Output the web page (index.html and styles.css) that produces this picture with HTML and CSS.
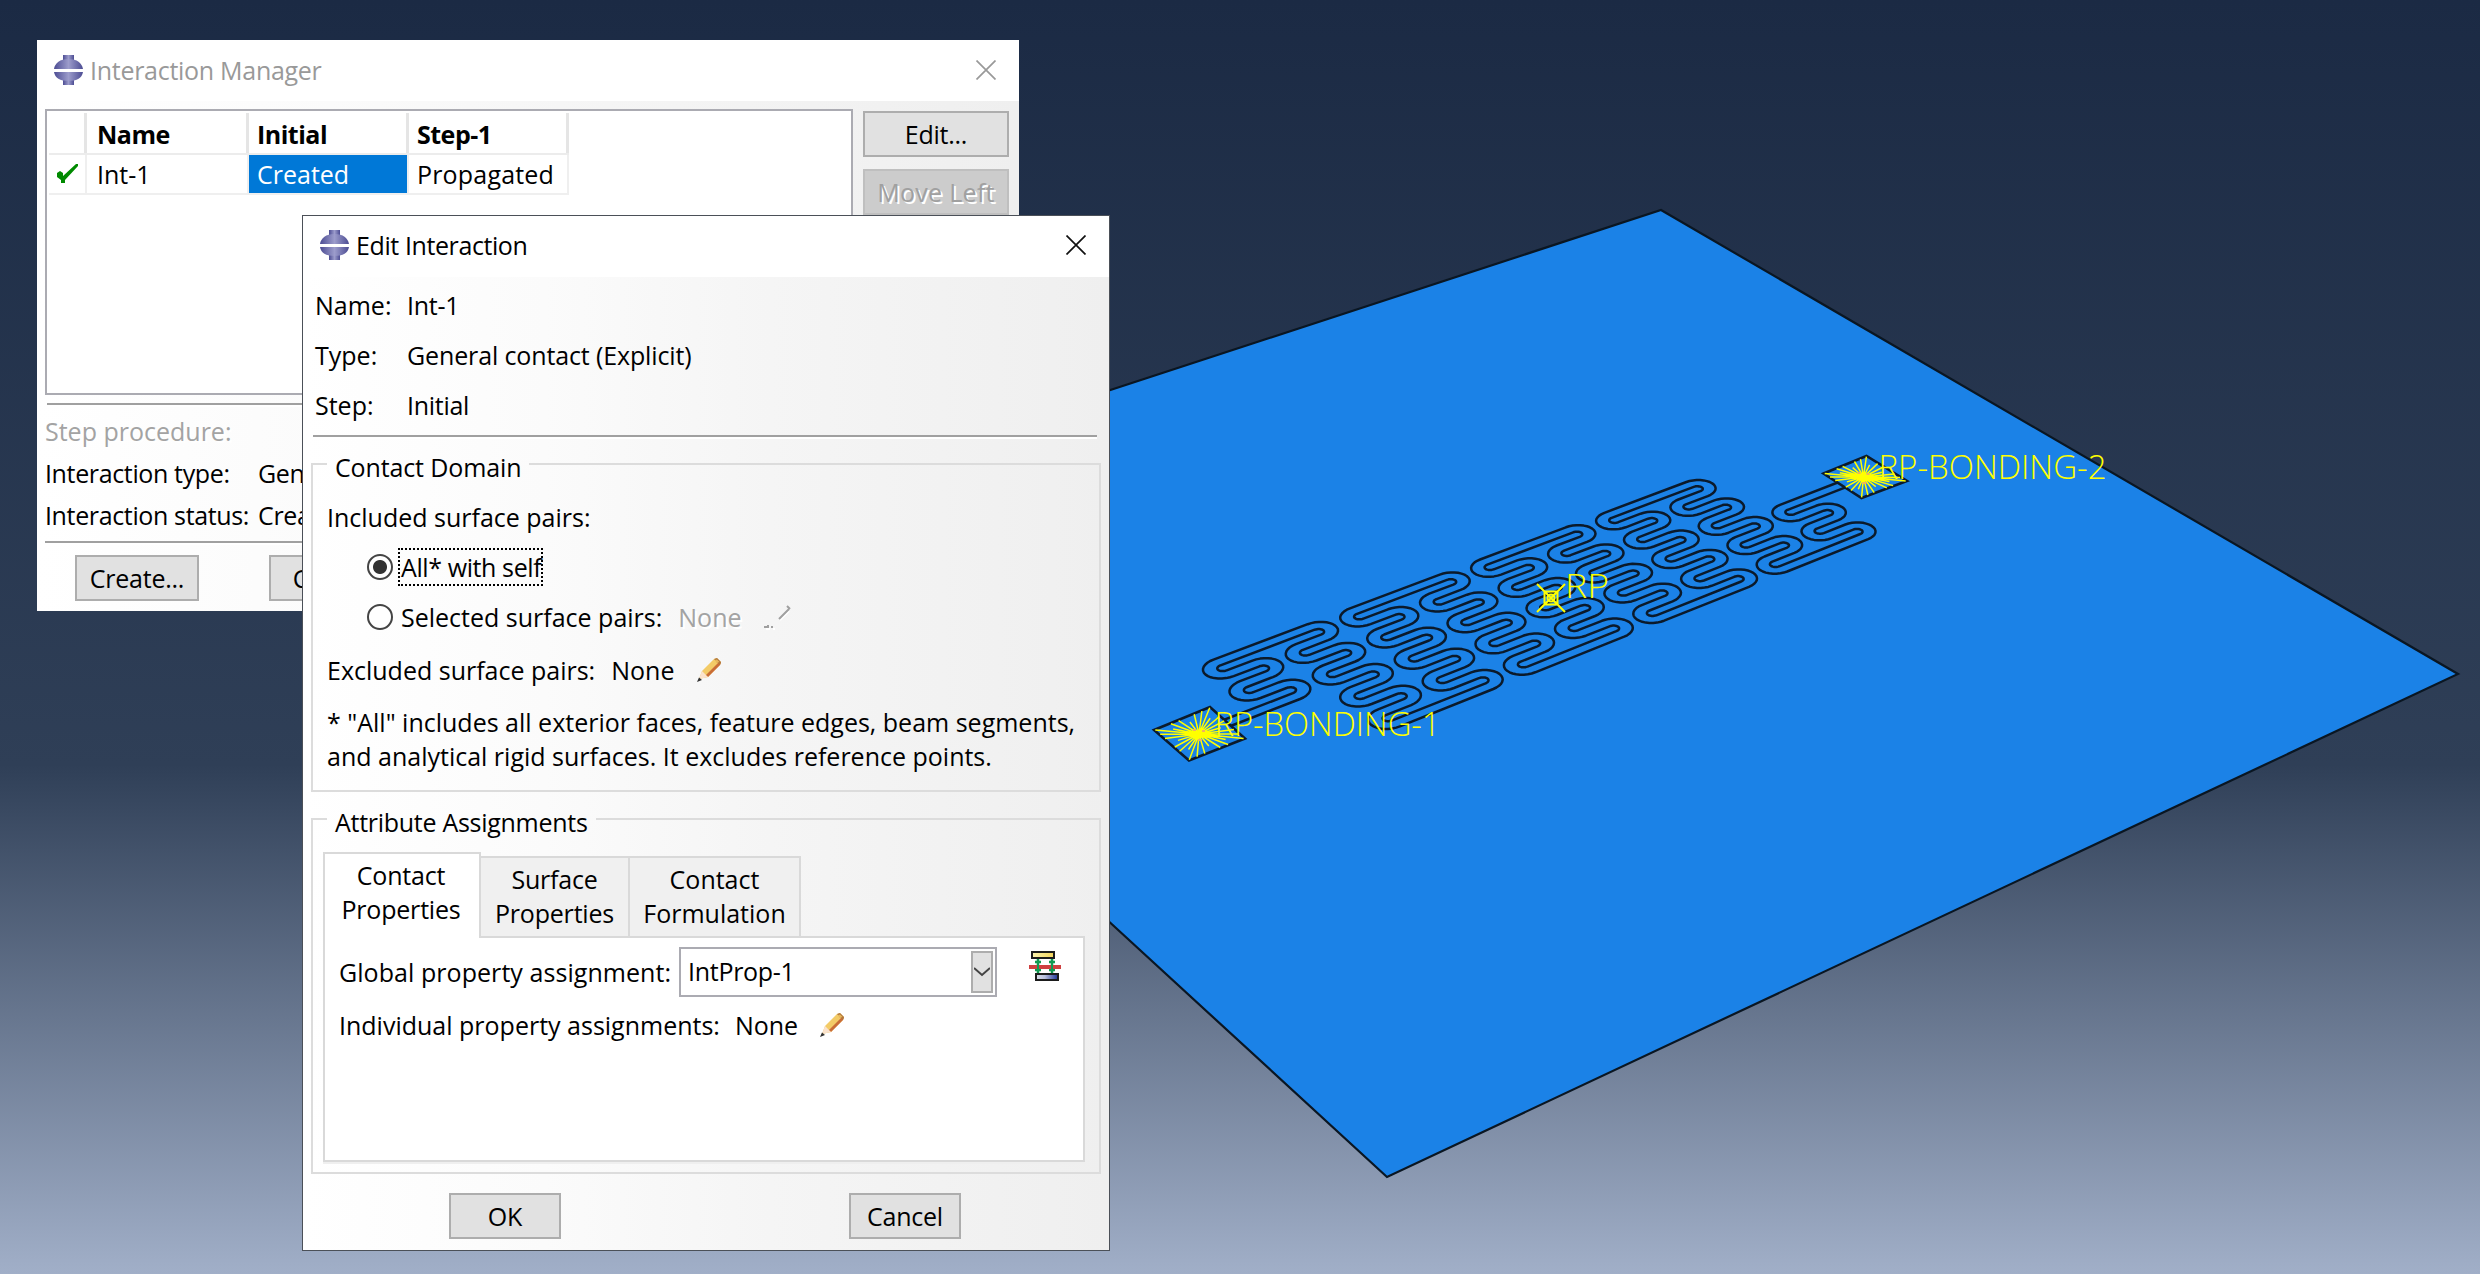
FILE: index.html
```html
<!DOCTYPE html>
<html lang="en">
<head>
<meta charset="utf-8">
<title>Edit Interaction</title>
<link rel="stylesheet" href="styles.css">
</head>
<body>
<svg width="0" height="0" class="defs">
  <defs>
    <linearGradient id="steel" x1="0" x2="1" y1="0" y2="0">
      <stop offset="0" stop-color="#4c4c93"/><stop offset=".5" stop-color="#9c9ccb"/><stop offset="1" stop-color="#4c4c93"/>
    </linearGradient>
    <linearGradient id="gold" x1="0" x2="1" y1="0" y2="0">
      <stop offset="0" stop-color="#fbf3ae"/><stop offset="1" stop-color="#f2d45c"/>
    </linearGradient>
    <linearGradient id="navy" x1="0" x2="1" y1="0" y2="0">
      <stop offset="0" stop-color="#dcdfea"/><stop offset=".4" stop-color="#b9c0dc"/><stop offset="1" stop-color="#1c3194"/>
    </linearGradient>
    <symbol id="app" viewBox="0 0 29 30">
      <path d="M9 0h11v6H9zM9 24h11v6H9z" fill="url(#steel)"/>
      <path d="M0 14C1 8 6 4 14.500 4S28 8 29 14zM0 17h29c-1 6-6 9-14.500 9S1 23 0 17z" fill="url(#steel)"/>
      <path d="M0 14h29v3H0z" fill="#fff"/>
    </symbol>
    <symbol id="pencil" viewBox="0 0 28 26">
      <path d="M4 22 7 14 19 2l3-1 4 4-1 3-12 12z" fill="#f3cb67"/>
      <path d="M10.500 18.500 23.500 5.500 26 5l-1 3-12 12z" fill="#c96d37"/>
      <path d="M19 2l3-1 4 4-1 3z" fill="#b0763d"/>
      <path d="M20 3l2-.5 2.500 2.500-3 1z" fill="#e8b85b"/>
      <path d="M4 22 7 14l6 6z" fill="#fbe3cd"/>
      <path d="M2 25 4 20.500 7 23z" fill="#333"/>
    </symbol>
  </defs>
</svg>

<svg class="viewport" viewBox="0 0 2480 1274">
  <path class="plate" d="M1661 210 2458 674 1387 1177 1110 922.500 682 530z"/>
  <g id="trace" class="trace"></g>
  <g id="pads"></g>
  <g class="rp">
    <path d="M1537 584l28 28M1565 584l-28 28M1544.500 591.500h13v13h-13z"/>
    <circle cx="1551" cy="598" r="3.500"/>
  </g>
  <g class="labels">
    <text x="1214.500" y="735.500" textLength="226" lengthAdjust="spacingAndGlyphs">RP-BONDING-1</text>
    <text x="1878.500" y="479" textLength="228" lengthAdjust="spacingAndGlyphs">RP-BONDING-2</text>
    <text x="1565" y="598" textLength="44" lengthAdjust="spacingAndGlyphs">RP</text>
  </g>
</svg>

<section class="window manager">
  <header class="titlebar">
    <svg class="app-icon"><use href="#app"/></svg>
    <span class="tight">Interaction Manager</span>
    <svg class="close" viewBox="0 0 20 20"><path d="M.5.5l19 19M19.500.5l-19 19"/></svg>
  </header>
  <div class="manager-body">
    <div class="manager-top">
      <div class="listbox">
        <div class="row head">
          <span class="c0"></span><span class="c1">Name</span><span class="c2">Initial</span><span class="c2">Step-1</span>
        </div>
        <div class="row">
          <span class="c0"><svg class="check" viewBox="0 0 22 20"><path d="M0 9l3-2 3 2 0 3L19 0h2v2L8 16v3H4v-3L0 13z"/></svg></span><span class="c1">Int-1</span><span class="c2 selected">Created</span><span class="c2 wide">Propagated</span>
        </div>
      </div>
      <div class="side-buttons">
        <button class="btn">Edit...</button>
        <button class="btn disabled">Move Left</button>
      </div>
    </div>
    <div class="rule first"></div>
    <div class="facts">
      <div class="fact dim"><span class="fact-name">Step procedure:</span></div>
      <div class="fact"><span class="fact-name">Interaction type:</span><span>Gen</span></div>
      <div class="fact"><span class="fact-name">Interaction status:</span><span>Crea</span></div>
    </div>
    <div class="rule second"></div>
    <div class="manager-actions">
      <button class="btn">Create...</button>
      <button class="btn">Copy...</button>
    </div>
  </div>
</section>

<section class="window dialog">
  <header class="titlebar">
    <svg class="app-icon"><use href="#app"/></svg>
    <span class="tighter">Edit Interaction</span>
    <svg class="close" viewBox="0 0 20 20"><path d="M.5.5l19 19M19.500.5l-19 19"/></svg>
  </header>
  <div class="dialog-body">
    <div class="summary">
      <div class="pair"><span class="pair-name">Name:</span><span class="tight">Int-1</span></div>
      <div class="pair"><span class="pair-name">Type:</span><span class="snug">General contact (Explicit)</span></div>
      <div class="pair"><span class="pair-name">Step:</span><span class="tight">Initial</span></div>
    </div>
    <div class="rule"></div>

    <fieldset class="group domain">
      <legend class="snug">Contact Domain</legend>
      <div class="line included">Included surface pairs:</div>
      <label class="line radio-line"><span class="radio on"></span><span class="focus tighter">All* with self</span></label>
      <label class="line radio-line"><span class="radio"></span><span class="option">Selected surface pairs:</span><span class="none dim">None</span>
        <svg class="pencil-off" viewBox="0 0 28 26"><path class="lit" d="M16 16 25 7M2 25h4M9 25h2"/><path d="M15 15 25 5M23 2l3 3M0 23h5M8 22v2M4 21v2"/></svg></label>
      <div class="line excluded"><span>Excluded surface pairs:</span><span class="none">None</span><svg class="pencil"><use href="#pencil"/></svg></div>
      <p class="note">* "All" includes all exterior faces, feature edges, beam segments,<br>and analytical rigid surfaces. It excludes reference points.</p>
    </fieldset>

    <fieldset class="group attributes">
      <legend class="tight">Attribute Assignments</legend>
      <div class="tabs">
        <div class="tab active">Contact<br>Properties</div>
        <div class="tab second">Surface<br>Properties</div>
        <div class="tab third">Contact<br>Formulation</div>
      </div>
      <div class="panel">
        <div class="assign"><span class="assign-name">Global property assignment:</span>
          <div class="combo"><span class="tight">IntProp-1</span><span class="drop"><svg viewBox="0 0 16 10"><path d="M0 1l8 7 8-7"/></svg></span></div>
          <svg class="prop-icon" viewBox="0 0 32 30">
            <path d="M9 8v14M23 8v14M6 11h6M20 11h6M6 19h6M20 19h6" stroke="#139a52" stroke-width="2.500"/>
            <path d="M0 14h32v4H0z" fill="#cf4040"/><path d="M9 9v12M23 9v12" stroke="#139a52" stroke-width="2"/>
            <rect x="3" y="1" width="22" height="6" fill="url(#gold)" stroke="#1b1b1b" stroke-width="2"/>
            <rect x="7" y="23" width="22" height="6" fill="url(#navy)" stroke="#1b1b1b" stroke-width="2"/>
          </svg>
        </div>
        <div class="line individual"><span>Individual property assignments:</span><span class="none">None</span><svg class="pencil"><use href="#pencil"/></svg></div>
      </div>
    </fieldset>

    <div class="dialog-actions">
      <button class="btn">OK</button>
      <button class="btn">Cancel</button>
    </div>
  </div>
</section>
<script src="app.js"></script>
</body>
</html>
```
FILE: styles.css
```css
* { box-sizing: border-box; }
body {
  margin: 0;
  width: 2480px;
  height: 1274px;
  overflow: hidden;
  position: relative;
  font: 25px/34px "Open Sans", "Noto Sans", sans-serif;
  color: #000;
  background: linear-gradient(#1b2a44 0, #2f3f57 60%, #a1afc8 100%);
}
.defs { position: absolute; }
.snug { letter-spacing: -.13px; }
.tight { letter-spacing: -.28px; }
.tighter { letter-spacing: -.4px; }

/* 3D viewport */
.viewport { display: block; width: 2480px; height: 1274px; }
.plate { fill: #1b82e7; stroke: #0a1622; stroke-width: 2.2; }
.trace path { fill: none; stroke: #0b1a2b; stroke-width: 2.5; stroke-linejoin: round; }
.pad { fill: #1b82e7; stroke: #0b1a2b; stroke-width: 2.6; }
.rays { fill: none; stroke: #ff0; stroke-width: 1.5; }
.core { fill: none; stroke: #f0b060; stroke-width: 2; }
.rp { fill: none; stroke: #ff0; stroke-width: 2; }
.labels { fill: #ff0; font: 300 32.500px "Open Sans", sans-serif; }

/* Windows */
.window { position: absolute; display: flex; flex-direction: column; overflow: hidden; background: #fff; }
.titlebar { display: flex; align-items: center; height: 61px; flex: none; background: #fff; }
.titlebar span { margin-left: 7px; }
.app-icon { width: 29px; height: 30px; }
.close { width: 20px; height: 20px; margin-left: auto; fill: none; stroke: #111; stroke-width: 1.7; }
.rule { height: 4px; border-top: 2px solid #a0a0a0; background: #fff; flex: none; }
.btn {
  height: 46px; padding: 0; border: 2px solid #adadad; background: #e1e1e1;
  font: inherit; color: #000; letter-spacing: -.25px; line-height: 40px;
}
.dim { color: #a3a3a3; text-shadow: 2px 2px 0 #fff; }

.manager { left: 37px; top: 40px; width: 982px; height: 571px; }
.manager .titlebar { padding: 0 23px 2px 17px; color: #999; }
.manager .close { stroke: #999; }
.manager-body, .dialog-body { flex: 1; background: linear-gradient(90deg, #fff, #fbfbfb 30%, #f5f5f5 58%, #efefef); }
.manager-body { padding: 8px 10px 0 8px; }
.manager-top { display: flex; justify-content: space-between; height: 286px; }
.listbox { width: 808px; border: 2px solid #ababb2; background: #fff; padding: 2px; }
.row { display: flex; width: 520px; height: 40px; border-bottom: 2px solid #efefef; line-height: 38px; }
.row span { border-right: 2px solid #efefef; }
.row.head { height: 42px; font-weight: 700; line-height: 42px; border-bottom-color: #ececec; }
.row.head span { border-right: 3px solid #e5e5e5; letter-spacing: -.5px; }
.c0 { width: 38px; padding: 9px 0 0 8px; line-height: 0; }
.c1 { width: 162px; padding-left: 10px; }
.c2 { flex: 1; padding-left: 8px; }
.row .wide { letter-spacing: .18px; }
.row .selected { background: #0078d7; color: #fff; }
.check { width: 22px; height: 20px; fill: #008a00; }
.side-buttons { display: flex; flex-direction: column; gap: 12px; width: 146px; padding-top: 2px; }
.btn.disabled { background: #ccc; border-color: #bfbfbf; color: #a0a0a0; text-shadow: 2px 2px 0 #fff; letter-spacing: .3px; }
.rule.first { margin: 8px 0 3px 2px; }
.fact { display: flex; height: 42px; line-height: 42px; white-space: nowrap; letter-spacing: -.36px; }
.fact.dim { letter-spacing: 0; }
.fact-name { width: 213px; }
.rule.second { margin-top: 5px; }
.manager-actions { display: flex; gap: 70px; padding: 10px 0 0 30px; }
.manager-actions .btn { width: 124px; }

.dialog { left: 302px; top: 215px; width: 808px; height: 1036px; border: 1px solid #4b5058; }
.dialog .titlebar { padding: 0 23px 3px 17px; }
.dialog-body { padding: 3px 8px 0; }
.pair { display: flex; line-height: 50px; height: 50px; padding-left: 4px; }
.pair-name { width: 92px; }
.dialog-body > .rule { margin: 5px 4px 0 2px; }
.group { margin: 11px 0 0; padding: 0 14px; border: 2px solid #dcdcdc; min-width: 0; }
.group legend { height: 28px; padding: 0 8px; }
.domain { height: 342px; }
.line { display: flex; align-items: center; height: 34px; white-space: nowrap; }
.included { margin-top: 22px; }
.radio-line { margin-top: 16px; padding-left: 40px; }
.radio { width: 26px; height: 26px; border: 2px solid #444; border-radius: 50%; background: #fff; margin-right: 6px; flex: none; }
.radio.on { background: radial-gradient(circle, #333 0 6.500px, #fff 7.500px); }
.focus { outline: 2px dotted #000; width: 141px; margin-left: 1px; padding-left: 1px; }
.option { padding-left: 2px; }
.none { margin-left: 16px; }
.pencil { width: 28px; height: 26px; margin-left: 21px; }
.pencil-off { width: 28px; height: 26px; margin-left: 22px; fill: none; stroke: #a0a0a0; stroke-width: 2; }
.pencil-off .lit { stroke: #fff; }
.excluded { margin-top: 19px; }
.note { margin: 18px 0 0; white-space: nowrap; }
.attributes { margin-top: 13px; height: 369px; }
.tabs { display: flex; align-items: flex-end; margin: 19px 0 0 -4px; }
.tab { height: 80px; border: 2px solid #d9d9d9; border-left: 0; border-bottom: 0; background: #f0f0f0; text-align: center; padding-top: 4px; letter-spacing: -.2px; }
.tab.active { width: 158px; height: 86px; margin-bottom: -2px; padding-right: 2px; border-left: 2px solid #d9d9d9; background: #fff; position: relative; }
.tab.second { width: 149px; }
.tab.third { width: 171px; letter-spacing: 0; }
.panel { margin: 0 0 0 -4px; width: 762px; height: 226px; border: 2px solid #d9d9d9; background: #fff; padding: 9px 0 0 14px; box-shadow: 0 2px 0 #efefef; }
.assign { display: flex; align-items: center; height: 50px; }
.assign-name { width: 340px; white-space: nowrap; letter-spacing: .06px; margin-top: -1px; }
.combo { display: flex; justify-content: space-between; align-items: center; width: 318px; height: 50px; border: 2px solid #ababb2; padding: 0 2px 0 7px; }
.combo > .tight { margin-top: -2px; }
.drop { display: flex; align-items: center; justify-content: center; width: 22px; height: 42px; border: 2px solid #adadad; background: #e1e1e1; }
.drop svg { width: 16px; height: 10px; fill: none; stroke: #444; stroke-width: 2; }
.prop-icon { width: 32px; height: 30px; margin: -12px 0 0 32px; fill: none; }
.individual { margin-top: 11px; }
.individual .none { margin-left: 15px; }
.individual .pencil { margin-left: 20px; }
.dialog-actions { display: flex; gap: 288px; padding: 19px 0 0 138px; }
.dialog-actions .btn { width: 112px; }
```
FILE: app.js
```js
(function () {
  // Projective map from device coordinates to the screen, from four turn centres.
  // x counts serpentine periods, y counts runs.
  var world = [[0, 0.5], [0.5, 7.5], [3, 0.5], [3.5, 7.5]];
  var screen = [[1223.6, 667.8], [1389, 717.8], [1615, 520], [1775.8, 564]];

  function solve(rows) {
    var n = rows.length;
    for (var i = 0; i < n; i++) {
      var p = i;
      for (var r = i + 1; r < n; r++) if (Math.abs(rows[r][i]) > Math.abs(rows[p][i])) p = r;
      var swap = rows[i]; rows[i] = rows[p]; rows[p] = swap;
      for (r = 0; r < n; r++) {
        if (r === i) continue;
        var f = rows[r][i] / rows[i][i];
        for (var c = i; c <= n; c++) rows[r][c] -= f * rows[i][c];
      }
    }
    return rows.map(function (row, k) { return row[n] / row[k]; });
  }

  var eq = [];
  world.forEach(function (w, i) {
    var x = w[0], y = w[1], u = screen[i][0], v = screen[i][1];
    eq.push([x, y, 1, 0, 0, 0, -u * x, -u * y, u]);
    eq.push([0, 0, 0, x, y, 1, -v * x, -v * y, v]);
  });
  var h = solve(eq);
  function project(x, y) {
    var d = h[6] * x + h[7] * y + 1;
    return ((h[0] * x + h[1] * y + h[2]) / d).toFixed(1) + " " + ((h[3] * x + h[4] * y + h[5]) / d).toFixed(1);
  }

  var SPAN = 0.185;   // distance between facing turn centres of a column
  var ASPECT = 0.168; // one run spacing, in periods
  var WIDTH = 0.53;   // trace width, in run spacings
  var turns = [];
  function right(x, y, dir) { turns.push([x + SPAN, y, 1, dir]); }
  function left(x, y, dir) { turns.push([x, y, -1, dir]); }

  right(0, 3.5, -1); left(0, 2.5, -1); right(0, 1.5, -1); left(0, 0.5, -1);
  for (var c = 0; c < 4; c++) {
    for (var y = 0.5; y < 8; y += 2) { right(c + 0.5, y, 1); left(c + 0.5, y + 1, 1); }
    for (y = 7.5; y > (c === 3 ? 4 : 0); y -= 2) { right(c + 1, y, -1); left(c + 1, y - 1, -1); }
  }

  function edge(side) {
    var pts = [project(-0.45, 4 - side * WIDTH / 2)];
    turns.forEach(function (t) {
      var rad = 0.5 + side * t[2] * t[3] * WIDTH / 2;
      for (var k = 0; k <= 16; k++) {
        var a = Math.PI * k / 16;
        pts.push(project(t[0] + t[2] * rad * ASPECT * Math.sin(a), t[1] - t[3] * rad * Math.cos(a)));
      }
    });
    pts.push(project(4 + SPAN + 0.45, 4 - side * WIDTH / 2));
    return "M" + pts.join("L");
  }

  var NS = "http://www.w3.org/2000/svg";
  function add(parent, cls, d) {
    var p = document.createElementNS(NS, "path");
    p.setAttribute("class", cls);
    p.setAttribute("d", d);
    parent.appendChild(p);
  }
  var trace = document.getElementById("trace");
  add(trace, "edge", edge(1));
  add(trace, "edge", edge(-1));

  // Bonding pads with their coupling rays
  var pads = document.getElementById("pads");
  [
    { c: [[1154, 730], [1210, 707], [1245, 738.5], [1189, 760.5]], o: [1199, 734] },
    { c: [[1823.5, 473.5], [1866.5, 456], [1907, 481], [1861.5, 498]], o: [1863.5, 477] }
  ].forEach(function (pad) {
    add(pads, "pad", "M" + pad.c.map(function (q) { return q.join(" "); }).join("L") + "z");
    var rays = "";
    for (var s = 0; s < 4; s++) {
      for (var k = 0; k < 7; k++) {
        var a = pad.c[s], b = pad.c[(s + 1) % 4], f = k / 7, len = k % 3 === 1 ? 0.7 : 0.97;
        var x = a[0] + (b[0] - a[0]) * f, yy = a[1] + (b[1] - a[1]) * f;
        rays += "M" + pad.o.join(" ") + "L" + (pad.o[0] + (x - pad.o[0]) * len).toFixed(1) + " " + (pad.o[1] + (yy - pad.o[1]) * len).toFixed(1);
      }
    }
    add(pads, "rays", rays);
    add(pads, "core", "M" + (pad.o[0] - 6) + " " + (pad.o[1] - 4) + "h3m6 1h3M" + (pad.o[0] - 1) + " " + (pad.o[1] + 6) + "h4");
  });
})();
```
